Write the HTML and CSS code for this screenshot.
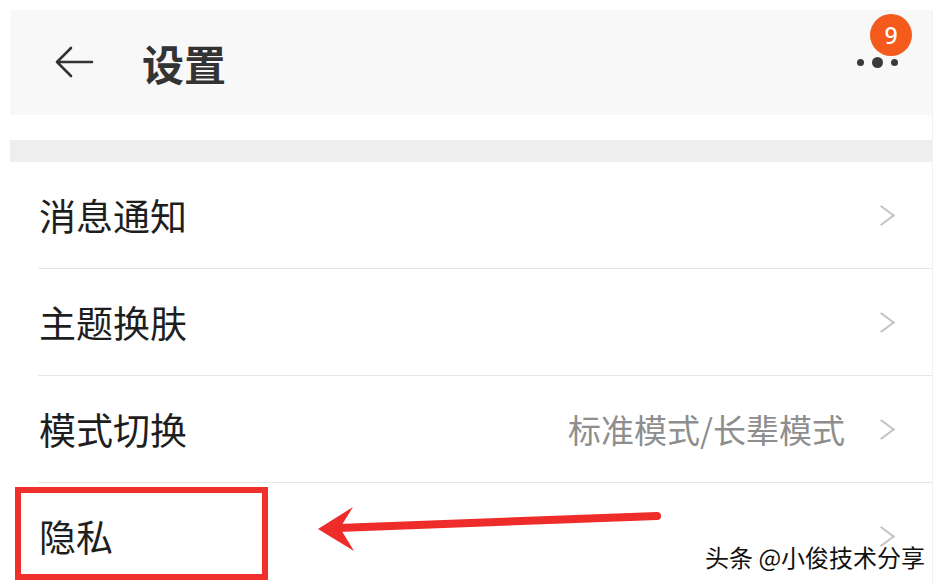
FILE: index.html
```html
<!DOCTYPE html>
<html lang="zh-CN">

<head>
    <meta charset="UTF-8">
    <meta name="viewport" content="width=device-width, initial-scale=1.0">
    <title>设置</title>
    <link rel="stylesheet" href="styles.css">
</head>

<body>
    <div class="screen">
        <!-- Barra superior -->
        <header class="topbar">
            <svg class="back" width="40" height="34" viewBox="0 0 40 34">
                <path d="M38 17H3M17 3L3 17L17 31" fill="none" stroke="#333" stroke-width="2.6" stroke-linecap="round" stroke-linejoin="round"/>
            </svg>
            <h1 class="title">设置</h1>
            <div class="more">
                <span class="dot"></span>
                <span class="dot big"></span>
                <span class="dot"></span>
                <span class="badge">9</span>
            </div>
        </header>

        <div class="band"></div>

        <!-- Lista de opções -->
        <ul class="list">
            <li class="row">
                <span class="label">消息通知</span>
                <span class="chevron"></span>
            </li>
            <li class="row">
                <span class="label">主题换肤</span>
                <span class="chevron"></span>
            </li>
            <li class="row">
                <span class="label">模式切换</span>
                <span class="value">标准模式/长辈模式</span>
                <span class="chevron"></span>
            </li>
            <li class="row">
                <span class="label">隐私</span>
                <span class="chevron"></span>
            </li>
        </ul>
    </div>

    <!-- Marcações em vermelho -->
    <div class="mark-box"></div>
    <svg class="mark-arrow" width="370" height="60" viewBox="0 0 370 60">
        <path d="M349 14L30 26" fill="none" stroke="#ee2d2a" stroke-width="8" stroke-linecap="round"/>
        <path d="M10 27L45 5L32 26L46 49Z" fill="#ee2d2a"/>
    </svg>

    <div class="watermark">头条 @小俊技术分享</div>
</body>

</html>
```

FILE: styles.css
```css
body {
    margin: 0;
    background-color: #fff;
    font-family: "Noto Sans CJK SC", "Noto Sans", sans-serif;
    color: #222;
    width: 943px;
    height: 585px;
    overflow: hidden;
    position: relative;
}

.screen {
    margin: 10px 0 0 10px;
    width: 922px;
    border-right: 1px solid #f1f1f1;
}

/* Barra superior */
.topbar {
    height: 105px;
    background-color: #f8f8f8;
    display: flex;
    align-items: center;
    padding: 0 34px 0 44px;
    position: relative;
}

.back {
    display: block;
    margin-top: -2px;
}

.title {
    margin: 0 0 0 48px;
    font-size: 42px;
    font-weight: 700;
    color: #333;
    line-height: 1;
    flex: 1;
}

.more {
    display: flex;
    align-items: center;
    gap: 8px;
    margin-top: 0;
    position: relative;
}

.dot {
    width: 7px;
    height: 7px;
    border-radius: 50%;
    background-color: #3a3a3a;
}

.dot.big {
    width: 11px;
    height: 11px;
}

.badge {
    position: absolute;
    left: 13px;
    top: -43px;
    width: 42px;
    height: 42px;
    border-radius: 50%;
    background-color: #f35a1c;
    color: #fff;
    font-family: "Noto Sans", sans-serif;
    font-size: 23px;
    font-weight: 500;
    display: flex;
    align-items: center;
    justify-content: center;
}

.band {
    height: 22px;
    margin-top: 25px;
    background-color: #eeeeee;
}

/* Lista */
.list {
    list-style: none;
    margin: 0;
    padding: 0;
}

.row {
    height: 106px;
    display: flex;
    align-items: center;
    margin-left: 28px;
    padding-right: 38px;
    border-bottom: 1px solid #e6e6e6;
}

.label {
    font-size: 37px;
    color: #1e1e1e;
    flex: 1;
    margin-left: 1px;
}

.value {
    font-size: 33px;
    color: #8e8e8e;
    margin-right: 28px;
}

.chevron {
    width: 15px;
    height: 15px;
    border-top: 2px solid #c4c4c4;
    border-right: 2px solid #c4c4c4;
    transform: rotate(45deg) skew(-8deg, -8deg);
    margin-right: 4px;
}

/* Marcações */
.mark-box {
    position: absolute;
    left: 15px;
    top: 487px;
    width: 241px;
    height: 81px;
    border: 6px solid #f0302a;
}

.mark-arrow {
    position: absolute;
    left: 308px;
    top: 502px;
}

.watermark {
    position: absolute;
    left: 705px;
    top: 539px;
    font-size: 24px;
    color: #111;
    text-shadow: 1px 0 #fff, -1px 0 #fff, 0 1px #fff, 0 -1px #fff;
}
```
